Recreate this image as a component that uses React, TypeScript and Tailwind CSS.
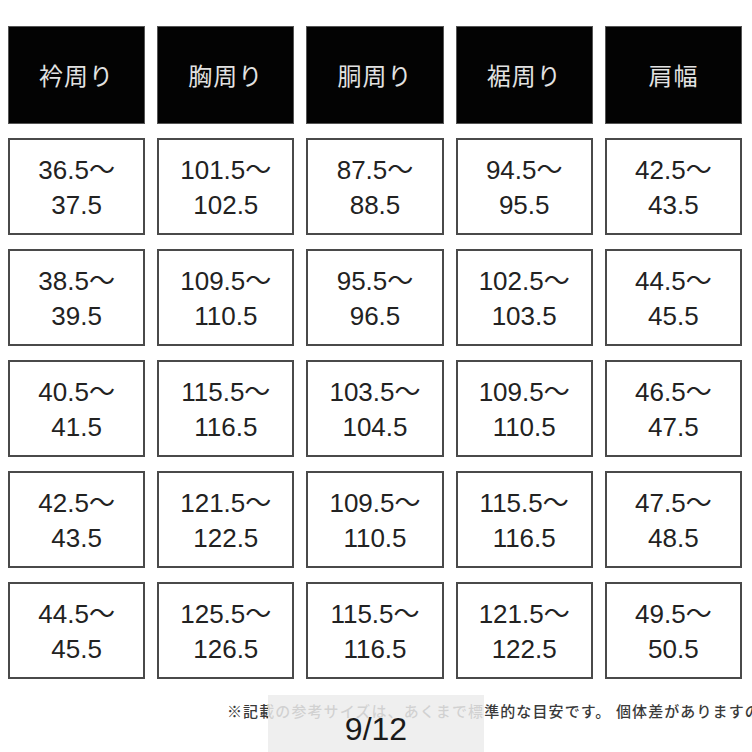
import React from "react";

const headers = ["衿周り", "胸周り", "胴周り", "裾周り", "肩幅"];
const rows: [string, string][][] = [
  [["36.5", "37.5"], ["101.5", "102.5"], ["87.5", "88.5"], ["94.5", "95.5"], ["42.5", "43.5"]],
  [["38.5", "39.5"], ["109.5", "110.5"], ["95.5", "96.5"], ["102.5", "103.5"], ["44.5", "45.5"]],
  [["40.5", "41.5"], ["115.5", "116.5"], ["103.5", "104.5"], ["109.5", "110.5"], ["46.5", "47.5"]],
  [["42.5", "43.5"], ["121.5", "122.5"], ["109.5", "110.5"], ["115.5", "116.5"], ["47.5", "48.5"]],
  [["44.5", "45.5"], ["125.5", "126.5"], ["115.5", "116.5"], ["121.5", "122.5"], ["49.5", "50.5"]],
];

export default function App() {
  return (
    <div
      className="relative w-[752px] h-[752px] overflow-hidden bg-white"
      style={{ fontFamily: '"Liberation Sans", "Noto Sans CJK JP", sans-serif' }}
    >
      <div className="pt-[26px] pl-[8px] w-[742px]">
        <div className="grid grid-cols-5 gap-x-[12px]">
          {headers.map((h) => (
            <div
              key={h}
              className="h-[98px] bg-[#030303] border border-[#555] flex items-center justify-center text-[24px] text-[#e2e2e2] tracking-[1px]"
              style={{ fontFamily: '"Noto Sans CJK JP", sans-serif' }}
            >
              {h}
            </div>
          ))}
        </div>
        <div className="mt-[14px] flex flex-col gap-y-[14px]">
          {rows.map((r, i) => (
            <div key={i} className="grid grid-cols-5 gap-x-[12px]">
              {r.map(([a, b], j) => (
                <div
                  key={j}
                  className="h-[97px] border-2 border-[#4a4a4a] flex flex-col items-center justify-center text-[26px] leading-[35px] text-[#222]"
                >
                  <div>
                    {a}
                    <span style={{ fontFamily: '"Noto Sans CJK JP", sans-serif' }}>～</span>
                  </div>
                  <div>{b}</div>
                </div>
              ))}
            </div>
          ))}
        </div>
      </div>
      <div
        className="mt-[21px] pl-[227px] whitespace-nowrap text-[15px] font-medium text-[#3a3a3a] tracking-[1.1px]"
        style={{ fontFamily: '"Noto Sans CJK JP", sans-serif' }}
      >
        ※記載の参考サイズは、あくまで標準的な目安です。 個体差がありますので
      </div>
      <div className="absolute left-[268px] top-[695px] w-[216px] h-[57px] bg-[#ececec]/85 flex items-center justify-center pt-[10px]">
        <span className="text-[32px] text-[#1a1a1a]" style={{ fontFamily: '"Liberation Sans", sans-serif' }}>
          9/12
        </span>
      </div>
    </div>
  );
}
